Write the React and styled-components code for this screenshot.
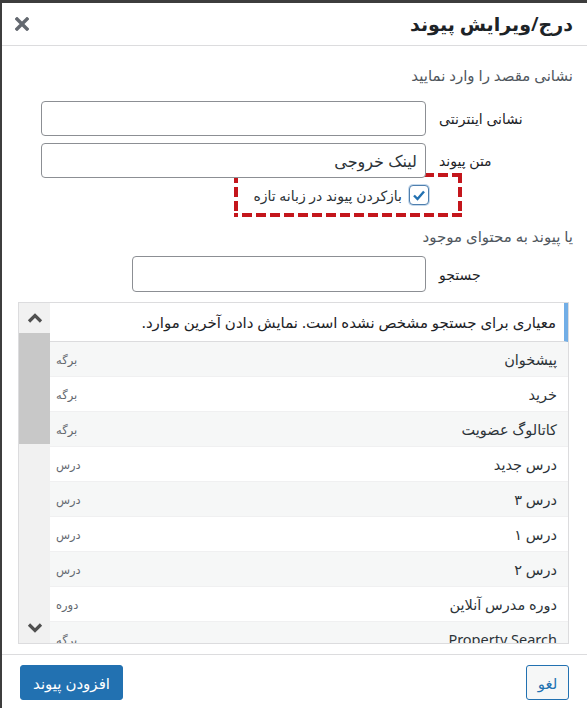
import React from 'react'
import styled, { createGlobalStyle } from 'styled-components'

const items = [
    { title: 'پیشخوان', type: 'برگه' },
    { title: 'خرید', type: 'برگه' },
    { title: 'کاتالوگ عضویت', type: 'برگه' },
    { title: 'درس جدید', type: 'درس' },
    { title: 'درس ۳', type: 'درس' },
    { title: 'درس ۱', type: 'درس' },
    { title: 'درس ۲', type: 'درس' },
    { title: 'دوره مدرس آنلاین', type: 'دوره' },
    { title: 'Property Search', type: 'برگه' },
]

const GlobalStyle = createGlobalStyle`
* { box-sizing: border-box; }
html, body { margin: 0; padding: 0; }
body {
    background: #3d3d3d;
    font-family: "Noto Sans", "DejaVu Sans", sans-serif;
}
`

const App = () => {
    return (
        <>
            <GlobalStyle />
            <Dialog>
                <Header>
                    <Title>درج/ویرایش پیوند</Title>
                    <Close aria-label="close">
                        <svg width="14" height="14" viewBox="0 0 14 14">
                            <path d="M2 2 L12 12 M12 2 L2 12" stroke="#646970" strokeWidth="3.4" strokeLinecap="square" />
                        </svg>
                    </Close>
                </Header>
                <Body>
                    <Intro>نشانی مقصد را وارد نمایید</Intro>
                    <FieldRow>
                        <Label>نشانی اینترنتی</Label>
                        <Input />
                    </FieldRow>
                    <FieldRow $gap={7}>
                        <Label>متن پیوند</Label>
                        <Input defaultValue="لینک خروجی" />
                    </FieldRow>
                    <Highlight>
                        <Check>
                            <svg width="16" height="16" viewBox="0 0 16 16">
                                <path d="M3 8.5 L6.5 12 L13 4.5" fill="none" stroke="#2271b1" strokeWidth="2.4" />
                            </svg>
                        </Check>
                        <CheckText>بازکردن پیوند در زبانه تازه</CheckText>
                    </Highlight>
                    <Intro $top={9}>یا پیوند به محتوای موجود</Intro>
                    <FieldRow $gap={10}>
                        <Label>جستجو</Label>
                        <Input $width={294} $height={36} />
                    </FieldRow>
                    <ListBox>
                        <ListContent>
                            <Notice>معیاری برای جستجو مشخص نشده است. نمایش دادن آخرین موارد.</Notice>
                            {items.map((item, i) => (
                                <Item key={i} $alt={i % 2 === 0}>
                                    <ItemTitle>{item.title}</ItemTitle>
                                    <ItemType>{item.type}</ItemType>
                                </Item>
                            ))}
                        </ListContent>
                        <ScrollBar>
                            <ScrollArrow>
                                <svg width="16" height="10" viewBox="0 0 16 10">
                                    <path d="M2 8.5 L8 2.5 L14 8.5" fill="none" stroke="#505050" strokeWidth="3.2" />
                                </svg>
                            </ScrollArrow>
                            <Thumb />
                            <ScrollArrow $bottom>
                                <svg width="16" height="10" viewBox="0 0 16 10">
                                    <path d="M2 1.5 L8 7.5 L14 1.5" fill="none" stroke="#505050" strokeWidth="3.2" />
                                </svg>
                            </ScrollArrow>
                        </ScrollBar>
                    </ListBox>
                </Body>
                <Footer>
                    <SecondaryButton>لغو</SecondaryButton>
                    <PrimaryButton>افزودن پیوند</PrimaryButton>
                </Footer>
            </Dialog>
        </>
    )
}

const Dialog = styled.div`
margin: 3px 0 0 2px;
height: 705px;
background: #fff;
direction: rtl;
display: flex;
flex-direction: column;
overflow: hidden;
`
const Header = styled.div`
height: 43px;
flex-shrink: 0;
border-bottom: 1px solid #dcdcde;
display: flex;
align-items: center;
justify-content: space-between;
padding: 0 14px 0 12px;
`
const Title = styled.h1`
margin: 0;
font-size: 19px;
font-weight: 600;
color: #1d2327;
`
const Close = styled.button`
border: none;
background: none;
padding: 0;
width: 16px;
height: 16px;
display: flex;
align-items: center;
justify-content: center;
`
const Body = styled.div`
flex: 1;
padding: 0 14px 0 16px;
`
const Intro = styled.p`
margin: ${p => p.$top ?? 19}px 0 0;
font-size: 15px;
line-height: 20px;
color: #50575e;
`
const FieldRow = styled.div`
display: flex;
align-items: center;
margin-top: ${p => p.$gap ?? 16}px;
`
const Label = styled.span`
width: 147px;
flex-shrink: 0;
text-align: left;
padding-left: 13px;
font-size: 14px;
color: #1d2327;
`
const Input = styled.input`
width: ${p => p.$width ?? 385}px;
height: ${p => p.$height ?? 35}px;
border: 1px solid #8c8f94;
border-radius: 4px;
padding: 0 8px;
font-family: inherit;
font-size: 16px;
color: #2c3338;
direction: rtl;
outline: none;
`
const dash = (dir) => `repeating-linear-gradient(${dir}, #c4161c 0 10px, transparent 10px 14px)`
const Highlight = styled.div`
width: 228px;
height: 44px;
margin: -5px 111px 0 0;
display: flex;
align-items: center;
gap: 7px;
padding: 0 33px 0 8px;
background:
    ${dash('270deg')} top right / 100% 4px no-repeat,
    ${dash('270deg')} bottom right / 100% 4px no-repeat,
    ${dash('180deg')} top left / 4px 100% no-repeat,
    ${dash('180deg')} top right / 4px 100% no-repeat;
`
const Check = styled.span`
width: 20px;
height: 20px;
flex-shrink: 0;
border: 1px solid #4f7fae;
border-radius: 4px;
display: flex;
align-items: center;
justify-content: center;
background: #fff;
box-shadow: 0 0 0 1px #c5d9ec;
`
const CheckText = styled.span`
font-size: 14px;
color: #2c3338;
white-space: nowrap;
`
const ListBox = styled.div`
margin: 10px 4px 0 0;
height: 342px;
border: 1px solid #dcdcde;
display: flex;
overflow: hidden;
`
const ListContent = styled.div`
flex: 1;
overflow: hidden;
`
const Notice = styled.div`
height: 39px;
border-bottom: 1px solid #dcdcde;
border-right: 4px solid #72aee6;
display: flex;
align-items: center;
padding-right: 8px;
font-size: 15px;
color: #1d2327;
white-space: nowrap;
`
const Item = styled.div`
height: 35px;
display: flex;
align-items: center;
justify-content: space-between;
padding: 0 11px 0 6px;
background: ${p => (p.$alt ? '#f6f7f7' : '#fff')};
border-bottom: 1px solid #f0f0f1;
`
const ItemTitle = styled.span`
font-size: 14.5px;
color: #2c3338;
`
const ItemType = styled.span`
font-size: 11.5px;
color: #646970;
`
const ScrollBar = styled.div`
width: 31px;
flex-shrink: 0;
background: #f1f1f1;
display: flex;
flex-direction: column;
`
const ScrollArrow = styled.div`
height: 30px;
display: flex;
align-items: center;
justify-content: center;
margin-top: ${p => (p.$bottom ? 'auto' : '0')};
`
const Thumb = styled.div`
height: 111px;
background: #c8c8c8;
`
const Footer = styled.div`
height: 54px;
flex-shrink: 0;
border-top: 1px solid #dcdcde;
display: flex;
align-items: flex-start;
justify-content: space-between;
padding: 10px 18px 0 18px;
`
const ButtonBase = styled.button`
height: 35px;
border-radius: 3px;
font-family: inherit;
font-size: 15px;
padding: 0 12px;
cursor: pointer;
`
const SecondaryButton = styled(ButtonBase)`
width: 43px;
padding: 0;
background: #f6f7f7;
border: 1px solid #2271b1;
color: #2271b1;
`
const PrimaryButton = styled(ButtonBase)`
width: 103px;
padding: 0;
background: #2271b1;
border: 1px solid #2271b1;
color: #fff;
`

export default App
